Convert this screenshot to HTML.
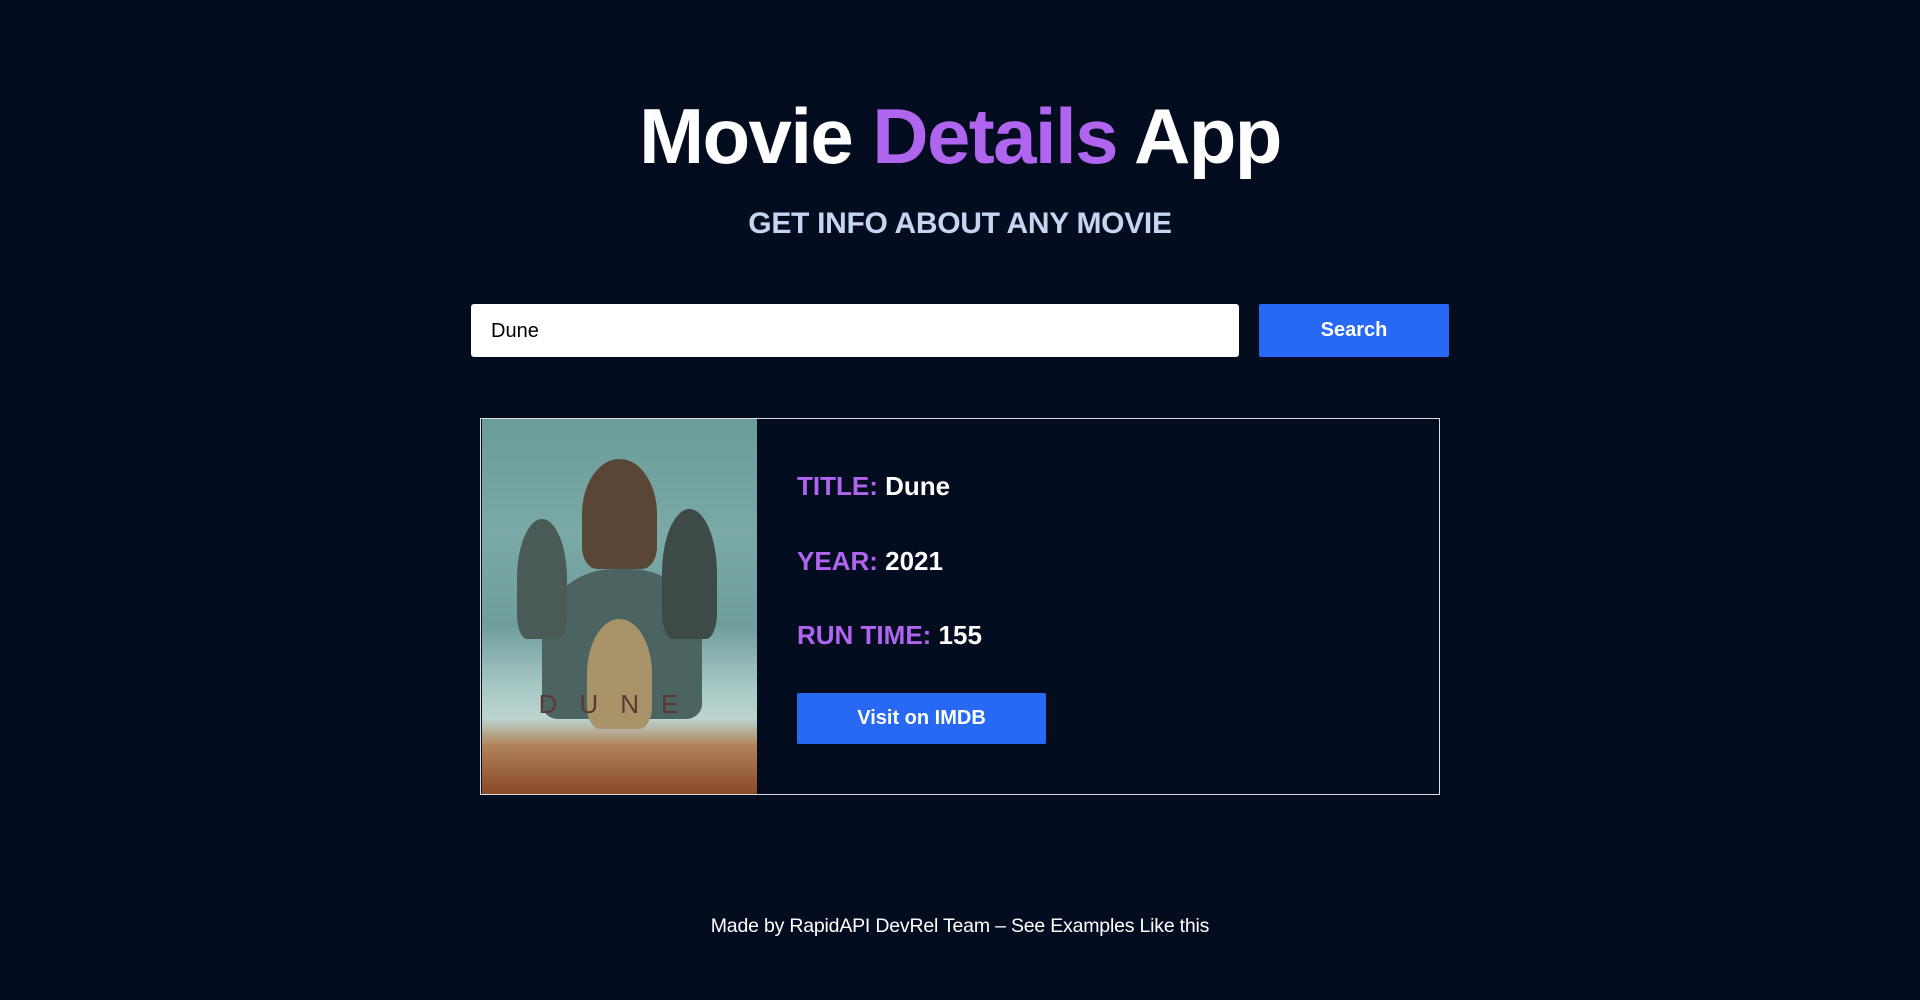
<!DOCTYPE html>
<html><head><meta charset="utf-8"><style>
html,body{margin:0;padding:0;background:#040c20;width:1920px;height:1000px;overflow:hidden;font-family:"Liberation Sans",sans-serif;color:#fff}
h1{position:absolute;top:88px;left:0;width:1920px;text-align:center;margin:0;font-size:78px;font-weight:bold;letter-spacing:-1.6px;line-height:96px}
h1 span{color:#b065ee}
.sub{position:absolute;top:206px;left:0;width:1920px;text-align:center;font-size:30px;font-weight:bold;color:#c8d4f0;line-height:36px;letter-spacing:-0.3px}
.inp{position:absolute;left:471px;top:304px;width:768px;height:53px;background:#fff;border-radius:3px;color:#000;font-size:20px;line-height:54px;box-sizing:border-box;padding-left:20px}
.btn{position:absolute;background:#2768f5;color:#fff;font-weight:bold;text-align:center;border-radius:2px}
.card{position:absolute;left:480px;top:418px;width:960px;height:377px;border:1px solid #ddd;box-sizing:border-box}
.poster{position:absolute;left:1px;top:0;width:275px;height:375px;overflow:hidden;background:linear-gradient(180deg,#6a9c98 0%,#7aa9a6 30%,#6f9e9c 55%,#a9c9c6 72%,#bcd4d0 80%,#b0835a 87%,#8a4a28 100%)}
.fig{position:absolute;border-radius:50% 50% 20% 20%;background:#3d5552}
.row{position:absolute;left:316px;font-size:26px;font-weight:bold;line-height:30px}
.row b{color:#b065ee}
.foot{position:absolute;top:915px;left:0;width:1920px;text-align:center;font-size:19.5px;letter-spacing:-0.2px}
</style></head><body>
<h1>Movie <span>Details</span> App</h1>
<div class="sub">GET INFO ABOUT ANY MOVIE</div>
<div class="inp">Dune</div>
<div class="btn" style="left:1259px;top:304px;width:190px;height:53px;line-height:53px;font-size:20px">Search</div>
<div class="card">
<div class="poster">
<div class="fig" style="left:60px;top:150px;width:160px;height:150px;background:#4c6461;border-radius:45% 45% 10% 10%"></div>
<div class="fig" style="left:100px;top:40px;width:75px;height:110px;background:#5a4636"></div>
<div class="fig" style="left:35px;top:100px;width:50px;height:120px;background:#4a5a56"></div>
<div class="fig" style="left:180px;top:90px;width:55px;height:130px;background:#3e4a48"></div>
<div class="fig" style="left:105px;top:200px;width:65px;height:110px;background:#a89468"></div>
<div style="position:absolute;left:0;top:270px;width:275px;text-align:center;color:#5a3a30;font-size:26px;letter-spacing:22px">DUNE</div>
</div>
<div class="row" style="top:52px"><b>TITLE:</b> Dune</div>
<div class="row" style="top:127px"><b>YEAR:</b> 2021</div>
<div class="row" style="top:201px"><b>RUN TIME:</b> 155</div>
<div class="btn" style="left:316px;top:274px;width:249px;height:51px;line-height:51px;font-size:20px">Visit on IMDB</div>
</div>
<div class="foot">Made by RapidAPI DevRel Team – See Examples Like this</div>
</body></html>
